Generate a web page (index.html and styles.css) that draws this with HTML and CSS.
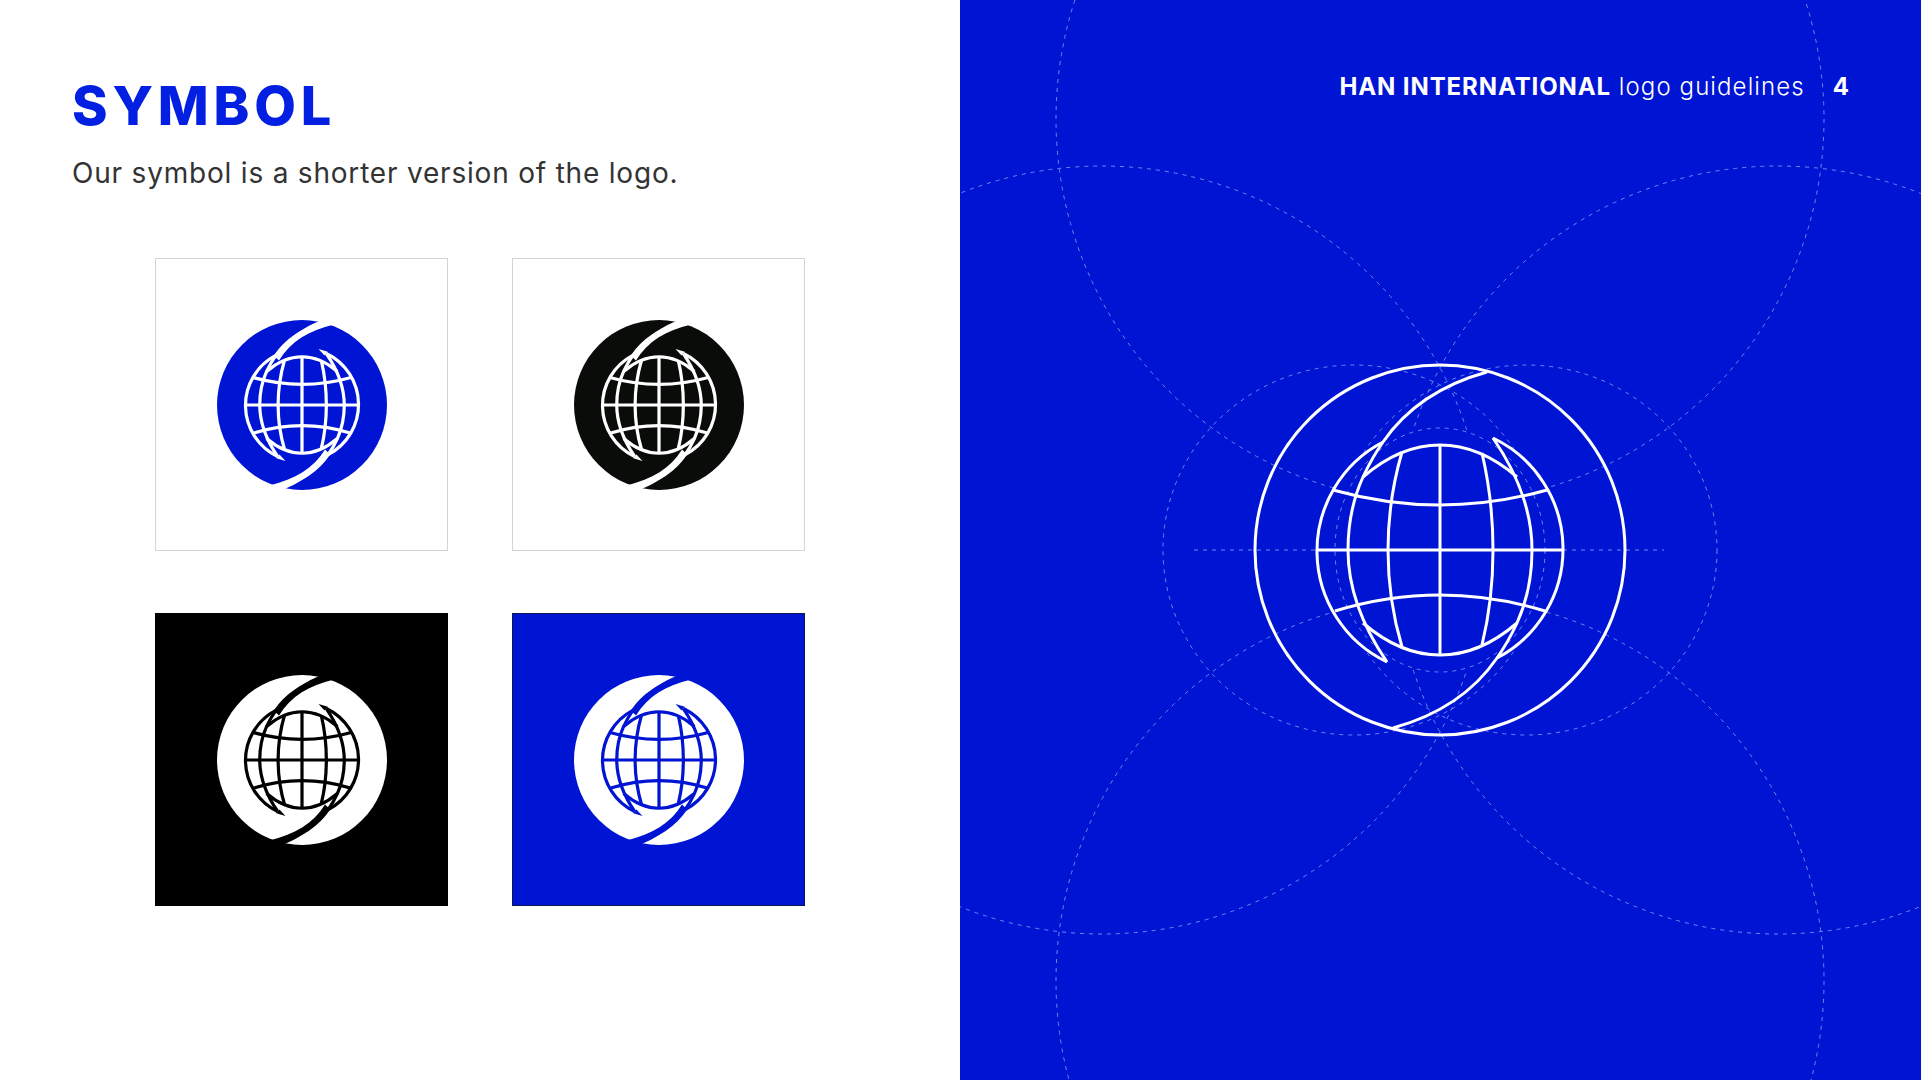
FILE: index.html
```html
<!DOCTYPE html>
<html lang="en">
<head>
<meta charset="utf-8">
<title>Symbol - HAN INTERNATIONAL logo guidelines</title>
<link rel="stylesheet" href="styles.css">
</head>
<body>
<svg class="defs" width="0" height="0" aria-hidden="true">
  <defs>
    <g id="globe-lines">
      <path d="M-53,112Q-92,55 -92,0Q-92,-40 -77,-73C-70,-88 -64,-98 -57,-108C-35,-140 0,-165 47,-178"/>
      <path d="M53,-112Q92,-55 92,0Q92,40 77,73C70,88 64,98 57,108C35,140 0,165 -47,178"/>
      <path d="M-57,-108A123,123 0 0 0 -53,112"/>
      <path d="M53,-112A123,123 0 0 1 57,108"/>
      <path d="M-77,-73Q-40,-105 0,-105Q40,-105 77,-73"/>
      <path d="M-77,73Q-40,105 0,105Q40,105 77,73"/>
      <path d="M-38,-98Q-52,-50 -52,0Q-52,50 -38,97"/>
      <path d="M42,-97Q53,-50 53,0Q53,50 42,95"/>
      <path d="M0,-105V105"/>
      <path d="M-124,0H124"/>
      <path d="M-107,-60Q0,-30 107,-60"/>
      <path d="M-105,61Q0,29 105,61"/>
    </g>
    <g id="symbol">
      <circle class="disc" r="185"/>
      <path class="cut" d="M43,-185C10,-172 -28,-150 -60,-106L-50,-97C-25,-138 15,-162 70,-175Z"/>
      <path class="cut" d="M-43,185C-10,172 28,150 60,106L50,97C25,138 -15,162 -70,175Z"/>
      <path class="cut" d="M36,-122L56,-116L49,-108Z"/>
      <path class="cut" d="M-36,122L-56,116L-49,108Z"/>
      <use href="#globe-lines" class="lines"/>
    </g>
  </defs>
</svg>
<main class="slide">
  <section class="intro">
    <h1 class="title">SYMBOL</h1>
    <p class="lead">Our symbol is a shorter version of the logo.</p>
    <div class="tiles">
      <div class="tile tile-white tone-blue"><svg class="mark" viewBox="-185 -185 370 370"><use href="#symbol"/></svg></div>
      <div class="tile tile-white tone-black"><svg class="mark" viewBox="-185 -185 370 370"><use href="#symbol"/></svg></div>
      <div class="tile tile-black tone-inv-black"><svg class="mark" viewBox="-185 -185 370 370"><use href="#symbol"/></svg></div>
      <div class="tile tile-blue tone-inv-blue"><svg class="mark" viewBox="-185 -185 370 370"><use href="#symbol"/></svg></div>
    </div>
  </section>
  <section class="canvas">
    <svg class="construction" viewBox="-480 -550 961 1080">
      <g class="dash">
        <circle cx="0" cy="-431" r="384"/>
        <circle cx="0" cy="431" r="384"/>
        <circle cx="-338" cy="0" r="384"/>
        <circle cx="338" cy="0" r="384"/>
        <ellipse cx="-86" cy="0" rx="191" ry="185"/>
        <ellipse cx="86" cy="0" rx="191" ry="185"/>
        <path d="M-246,0H224"/>
      </g>
      <circle class="mask" r="123"/>
      <ellipse class="dash" rx="105" ry="122"/>
      <circle class="ring" r="185"/>
      <use href="#globe-lines" class="ring"/>
    </svg>
    <header class="running">
      <span class="running-text"><b class="brand">HAN INTERNATIONAL</b> <span class="running-rest">logo guidelines</span></span>
      <span class="page">4</span>
    </header>
  </section>
</main>
</body>
</html>
```
FILE: styles.css
```css
* { box-sizing: border-box; }
html, body { margin: 0; padding: 0; background: #fff; }
body { width: 1921px; height: 1080px; overflow: hidden; font-family: Inter, "Open Sans", "Liberation Sans", sans-serif; }
.defs { position: absolute; }
.slide { display: flex; width: 1921px; height: 1080px; }

.intro { width: 960px; flex: none; padding: 74px 0 0 72px; background: #fff; }
.title { margin: 0; font-size: 54px; line-height: 64px; font-weight: 800; color: #0320e2; letter-spacing: 4.8px; }
.lead { margin: 17px 0 0; font-size: 28px; line-height: 36px; font-weight: 400; color: #333; letter-spacing: 0.8px; }
.tiles { display: grid; grid-template-columns: 293px 293px; grid-auto-rows: 293px; gap: 62px 64px; margin: 67px 0 0 83px; }
.tile { display: flex; align-items: center; justify-content: center; border: 1px solid #d4d4d4; }
.tile-black { background: #000; border-color: #000; }
.tile-blue { background: #0014d4; border-color: #10154f; }
.mark { width: 170px; height: 170px; display: block; overflow: visible; }
.disc { fill: var(--disc); }
.cut { fill: var(--line); }
.lines { fill: none; stroke: var(--line); stroke-width: 7; stroke-linejoin: round; }
.tone-blue { --disc: #0014d4; --line: #fff; }
.tone-black { --disc: #0a0c0a; --line: #fff; }
.tone-inv-black { --disc: #fff; --line: #000; }
.tone-inv-blue { --disc: #fff; --line: #0014d4; }

.canvas { position: relative; flex: 1; background: #0014d4; overflow: hidden; }
.construction { position: absolute; inset: 0; width: 961px; height: 1080px; display: block; }
.dash { fill: none; stroke: #6f86f2; stroke-width: 1; stroke-dasharray: 4 5; }
.mask { fill: #0014d4; }
.ring { fill: none; stroke: #fff; stroke-width: 3; }
.running { position: relative; display: flex; justify-content: flex-end; align-items: baseline; gap: 28px; padding: 72px 72px 0 0; color: #fff; font-size: 24px; line-height: 30px; font-weight: 300; }
.brand { font-weight: 700; letter-spacing: 0.9px; }
.running-rest { letter-spacing: 1.1px; margin-left: 1px; }
.page { font-weight: 700; }
```
